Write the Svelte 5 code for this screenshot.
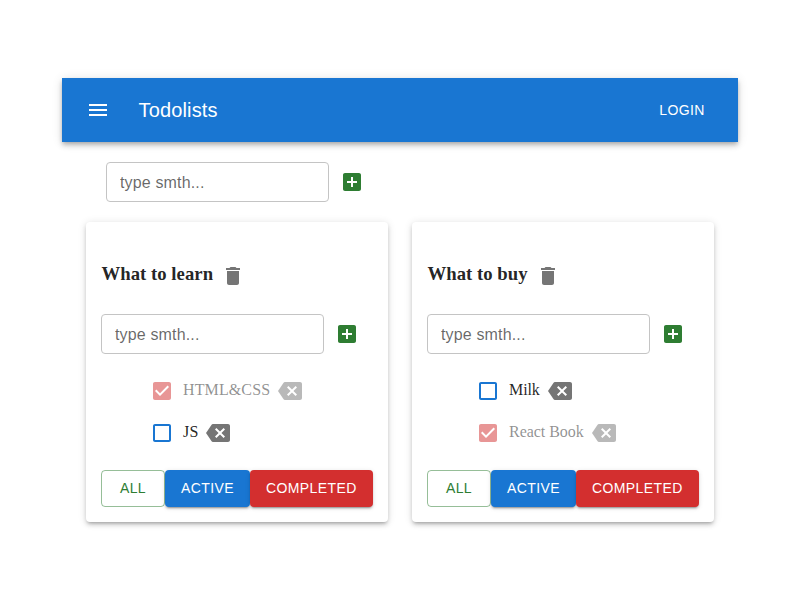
<script>
  const lists = [
    {
      title: 'What to learn',
      tasks: [
        { title: 'HTML&CSS', done: true, tracking: 0.12 },
        { title: 'JS', done: false, tracking: 0.15 }
      ]
    },
    {
      title: 'What to buy',
      tasks: [
        { title: 'Milk', done: false, tracking: -0.1 },
        { title: 'React Book', done: true, tracking: -0.04 }
      ]
    }
  ];
  const icons = {
    menu: 'M3 18h18v-2H3v2zm0-5h18v-2H3v2zm0-7v2h18V6H3z',
    add: 'M19 3H5c-1.11 0-2 .9-2 2v14c0 1.1.89 2 2 2h14c1.1 0 2-.9 2-2V5c0-1.1-.9-2-2-2zm-2 10h-4v4h-2v-4H7v-2h4V7h2v4h4v2z',
    trash: 'M6 19c0 1.1.9 2 2 2h8c1.1 0 2-.9 2-2V7H6v12zM19 4h-3.500l-1-1h-5l-1 1H5v2h14V4z',
    checked: 'M19 3H5c-1.11 0-2 .9-2 2v14c0 1.1.89 2 2 2h14c1.11 0 2-.9 2-2V5c0-1.1-.89-2-2-2zm-9 14l-5-5 1.410-1.410L10 14.170l7.590-7.590L19 8l-9 9z',
    unchecked: 'M19 5v14H5V5h14m0-2H5c-1.100 0-2 .9-2 2v14c0 1.100.9 2 2 2h14c1.100 0 2-.9 2-2V5c0-1.100-.9-2-2-2z',
    remove: 'M22 3H7c-.69 0-1.230.350-1.590.880L0 12l5.410 8.110c.360.530.9.890 1.590.890h15c1.100 0 2-.9 2-2V5c0-1.100-.9-2-2-2zm-3 12.590L17.590 17 14 13.410 10.410 17 9 15.590 12.590 12 9 8.410 10.410 7 14 10.590 17.590 7 19 8.410 15.410 12 19 15.590z'
  };
</script>

{#snippet icon(name)}
  <svg viewBox="0 0 24 24" aria-hidden="true"><path d={icons[name]} /></svg>
{/snippet}

{#snippet addForm()}
  <div class="form">
    <input type="text" placeholder="type smth..." />
    <button class="icon add" aria-label="Add">{@render icon('add')}</button>
  </div>
{/snippet}

<div class="app">
  <header>
    <button class="icon menu" aria-label="Menu">{@render icon('menu')}</button>
    <div class="brand">Todolists</div>
    <button class="btn login">Login</button>
  </header>
  <main>
    <div class="new-list">{@render addForm()}</div>
    <div class="lists">
      {#each lists as list}
        <section class="card">
          <h3>
            <span>{list.title}</span>
            <button class="icon" aria-label="Delete list">{@render icon('trash')}</button>
          </h3>
          {@render addForm()}
          <ul>
            {#each list.tasks as task}
              <li class:done={task.done}>
                <button class="icon check" aria-label="Toggle">{@render icon(task.done ? 'checked' : 'unchecked')}</button>
                <span style:letter-spacing="{task.tracking}px">{task.title}</span>
                <button class="icon" aria-label="Delete task">{@render icon('remove')}</button>
              </li>
            {/each}
          </ul>
          <div class="filters">
            <button class="btn all">All</button>
            <button class="btn active">Active</button>
            <button class="btn completed">Completed</button>
          </div>
        </section>
      {/each}
    </div>
  </main>
</div>

<style>
  :global(body) {
    background: #fff;
  }
  .app {
    box-sizing: border-box;
    width: 800px;
    height: 600px;
    padding: 78px 62px 0;
    overflow: hidden;
    color: rgba(0, 0, 0, 0.87);
    font-family: 'Liberation Serif', 'Times New Roman', serif;
    font-size: 16px;
    letter-spacing: 0.15px;
  }
  button {
    border: 0;
    padding: 0;
    background: none;
    color: inherit;
    font: inherit;
  }
  svg {
    display: block;
    width: 24px;
    height: 24px;
    fill: currentColor;
  }
  .icon {
    flex: none;
    width: 24px;
    height: 24px;
    color: #757575;
  }
  .btn {
    box-sizing: border-box;
    height: 36.5px;
    min-width: 64px;
    padding: 6px 16px;
    border-radius: 4px;
    font: 14px/24.5px 'Liberation Sans', Arial, sans-serif;
    letter-spacing: 0.4px;
    text-transform: uppercase;
    color: #fff;
    white-space: nowrap;
  }
  header {
    box-sizing: border-box;
    display: flex;
    align-items: center;
    height: 64px;
    padding: 0 24px;
    background: #1976d2;
    color: #fff;
    box-shadow: 0 2px 4px -1px rgba(0, 0, 0, 0.2), 0 4px 5px 0 rgba(0, 0, 0, 0.14), 0 1px 10px 0 rgba(0, 0, 0, 0.12);
  }
  .menu {
    margin-right: 28.5px;
    color: #fff;
  }
  .brand {
    flex: 1;
    font: 20px/32px 'Liberation Sans', Arial, sans-serif;
    letter-spacing: 0.15px;
  }
  .login {
    padding: 6px 8px;
  }
  main {
    padding: 20px 24px 0;
  }
  .new-list {
    padding-left: 20px;
  }
  .form {
    display: flex;
    align-items: center;
    gap: 11px;
  }
  input {
    box-sizing: border-box;
    width: 223px;
    height: 40px;
    padding: 2px 13px 0;
    border: 1px solid #c4c4c4;
    border-radius: 4px;
    background: #fff;
    font: 16px 'Liberation Sans', Arial, sans-serif;
    letter-spacing: 0.15px;
    outline: 0;
  }
  input::placeholder {
    color: rgba(0, 0, 0, 0.6);
    opacity: 1;
  }
  .add {
    color: #2e7d32;
  }
  .lists {
    display: flex;
    gap: 24px;
    margin-top: 20px;
  }
  .card {
    box-sizing: border-box;
    width: 302px;
    height: 300px;
    padding: 34px 15px 0;
    border-radius: 4px;
    background: #fff;
    box-shadow: 0 3px 3px -2px rgba(0, 0, 0, 0.2), 0 3px 4px 0 rgba(0, 0, 0, 0.14), 0 1px 8px 0 rgba(0, 0, 0, 0.12);
  }
  h3 {
    display: flex;
    align-items: center;
    gap: 8px;
    height: 40px;
    margin: 0 0 18px;
    font-size: 18.72px;
    line-height: 28px;
    letter-spacing: 0.03px;
  }
  h3 span {
    margin: -4px 0 0 0.5px;
  }
  ul {
    margin: 16px 0 0;
    padding: 0 0 0 49px;
    list-style: none;
  }
  li {
    display: flex;
    align-items: center;
    height: 42px;
  }
  li span {
    margin: -2px 8px 0 9px;
    line-height: 24px;
  }
  .done {
    opacity: 0.5;
  }
  .check {
    color: #1976d2;
  }
  .done .check {
    color: #d32f2f;
  }
  .filters {
    display: flex;
    margin-top: 16px;
  }
  .all {
    border: 1px solid rgba(46, 125, 50, 0.5);
    padding: 5px 15px;
    color: #2e7d32;
  }
  .active,
  .completed {
    box-shadow: 0 3px 1px -2px rgba(0, 0, 0, 0.2), 0 2px 2px 0 rgba(0, 0, 0, 0.14), 0 1px 5px 0 rgba(0, 0, 0, 0.12);
  }
  .active {
    background: #1976d2;
  }
  .completed {
    background: #d32f2f;
  }
</style>
